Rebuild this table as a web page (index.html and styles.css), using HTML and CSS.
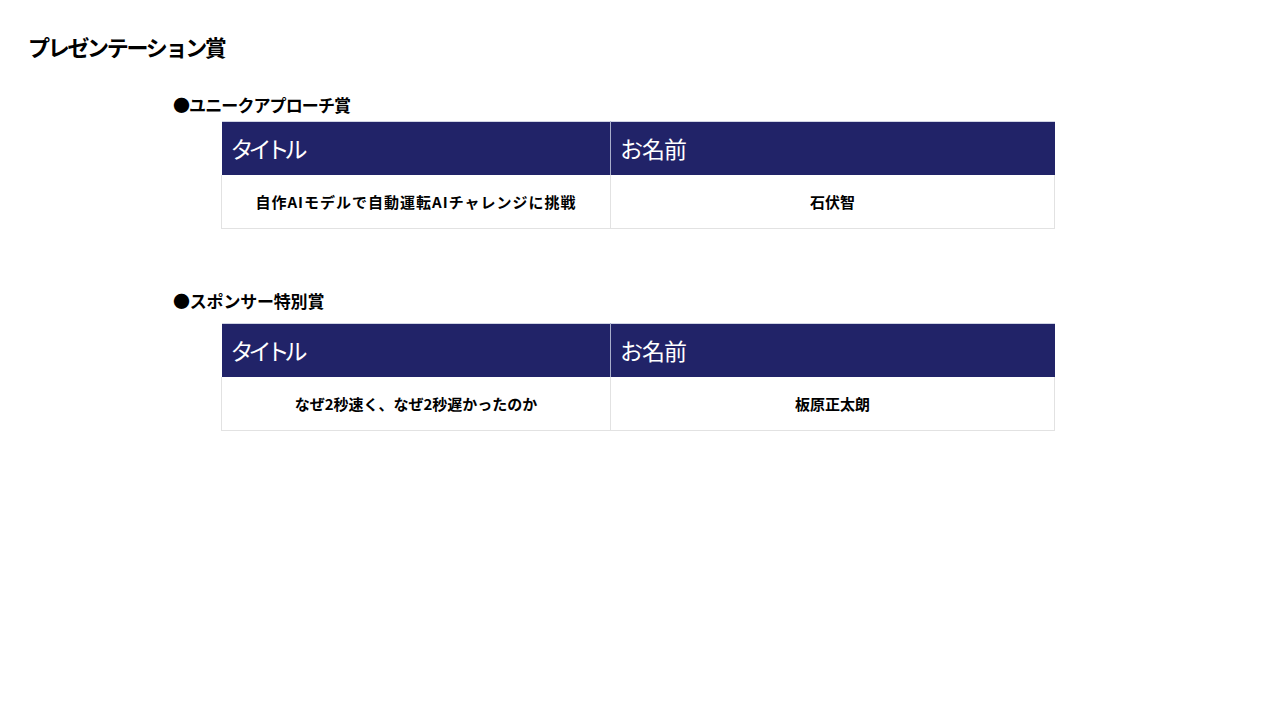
FILE: index.html
```html
<!DOCTYPE html>
<html lang="ja">
<head>
<meta charset="utf-8">
<link rel="stylesheet" href="styles.css">
</head>
<body>
<div class="page">
  <h1 class="title">プレゼンテーション賞</h1>
  <section class="award first">
    <h2 class="award-name">●ユニークアプローチ賞</h2>
    <table class="award-table">
      <thead>
        <tr><th class="col-title">タイトル</th><th class="col-name">お名前</th></tr>
      </thead>
      <tbody>
        <tr><td class="wide">自作AIモデルで自動運転AIチャレンジに挑戦</td><td>石伏智</td></tr>
      </tbody>
    </table>
  </section>
  <section class="award second">
    <h2 class="award-name">●スポンサー特別賞</h2>
    <table class="award-table">
      <thead>
        <tr><th class="col-title">タイトル</th><th class="col-name">お名前</th></tr>
      </thead>
      <tbody>
        <tr><td>なぜ2秒速く、なぜ2秒遅かったのか</td><td>板原正太朗</td></tr>
      </tbody>
    </table>
  </section>
</div>
</body>
</html>
```

FILE: styles.css
```css
html, body {
  margin: 0;
  padding: 0;
  background: #ffffff;
}
body {
  font-family: "Noto Sans CJK JP", "Noto Sans", sans-serif;
  color: #000;
  width: 1280px;
  height: 720px;
  overflow: hidden;
}
.page {
  padding: 30px 0 0 28px;
}
.title {
  margin: 0;
  font-size: 22px;
  font-weight: 700;
  line-height: 32px;
  letter-spacing: -2.3px;
}
.award {
  margin-left: 145px;
}
.award.first {
  margin-top: 31px;
}
.award.second {
  margin-top: 60px;
}
.award-name {
  margin: 0;
  font-size: 17px;
  font-weight: 700;
  line-height: 24px;
  letter-spacing: -0.9px;
}
.second .award-name {
  letter-spacing: -0.2px;
}
.award-table {
  margin-left: 48px;
  border-collapse: collapse;
  table-layout: fixed;
  width: 834px;
}
.first .award-table { margin-top: 4px; }
.second .award-table { margin-top: 10px; }
.award-table th {
  background: #212368;
  color: #ffffff;
  font-weight: 400;
  font-size: 23px;
  text-align: left;
  height: 53px;
  padding: 0 0 0 9px;
  border-top: 1px solid #d0d4e4;
  box-sizing: border-box;
}
.award-table th.col-title {
  width: 389px;
  border-right: 1px solid #a9aecb;
  letter-spacing: -5px;
}
.award-table th.col-name {
  letter-spacing: -1px;
}
.award-table td {
  height: 54px;
  padding: 0;
  text-align: center;
  font-size: 15px;
  font-weight: 700;
  border: 1px solid #e2e2e2;
  border-top: none;
  box-sizing: border-box;
}
.award-table td.wide {
  letter-spacing: 1px;
}
```
